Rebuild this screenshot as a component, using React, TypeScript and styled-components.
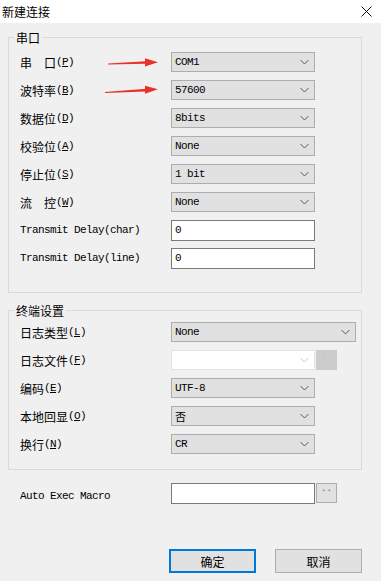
import { FC, ReactNode } from "react";
import styled, { createGlobalStyle } from "styled-components";

const GlobalStyle = createGlobalStyle`
  body {
    margin: 0;
    background: #f0f0f0;
  }
`;

const CJK = `"Noto Sans CJK SC", "Noto Sans", sans-serif`;
const MONO = `"Liberation Mono", "Noto Sans CJK SC", monospace`;

const Window = styled.div`
  position: relative;
  width: 381px;
  height: 581px;
  background: #f0f0f0;
  overflow: hidden;
  font-family: ${CJK};
  color: #000;
`;

const TitleBar = styled.div`
  height: 23px;
  background: #fff;
  display: flex;
  align-items: center;
  justify-content: space-between;
  padding: 0 9px 0 2px;
  font-size: 12px;
`;

const Body = styled.div`
  padding: 6px 19px 0 8px;
`;

const Group = styled.fieldset<{ $top: number; $padTop: number; $padBottom: number }>`
  margin: ${(p) => p.$top}px 0 0;
  border: 1px solid #dadada;
  padding: ${(p) => p.$padTop}px 0 ${(p) => p.$padBottom}px 11px;
  min-inline-size: auto;
`;

const Legend = styled.legend`
  margin-left: -6px;
  padding: 0 2px;
  font-size: 12px;
  line-height: 17px;
`;

const Form = styled.div`
  display: grid;
  grid-template-columns: 151px auto;
  grid-auto-rows: 20px;
  row-gap: 8px;
  align-items: center;
`;

const Label = styled.div<{ $drop?: number }>`
  display: flex;
  align-items: center;
  white-space: pre;
  font-size: 12px;
  height: 20px;
  padding-top: ${(p) => p.$drop ?? 0}px;
`;

const Mono = styled.span`
  font-family: ${MONO};
  font-size: 11px;
  letter-spacing: -0.6px;
`;

const Field = styled.div`
  display: flex;
  align-items: center;
  height: 20px;
`;

const ComboBox = styled.div<{ $width: number; $disabled?: boolean }>`
  box-sizing: border-box;
  width: ${(p) => p.$width}px;
  height: 20px;
  display: flex;
  align-items: center;
  padding: 0 5px 0 3px;
  background: ${(p) => (p.$disabled ? "#fff" : "#e1e1e1")};
  border: 1px solid ${(p) => (p.$disabled ? "#e3e3e3" : "#adadad")};
  font-family: ${MONO};
  font-size: 11px;
  letter-spacing: -0.6px;
  svg {
    margin-left: auto;
  }
`;

const TextBox = styled.div`
  box-sizing: border-box;
  width: 144px;
  height: 21px;
  display: flex;
  align-items: center;
  padding: 0 3px;
  background: #fff;
  border: 1px solid #7a7a7a;
  font-family: ${MONO};
  font-size: 11px;
`;

const DotButton = styled.div<{ $disabled?: boolean }>`
  box-sizing: border-box;
  width: 21px;
  height: 20px;
  margin-left: 1px;
  display: flex;
  align-items: flex-start;
  justify-content: center;
  background: ${(p) => (p.$disabled ? "#cccccc" : "#e1e1e1")};
  border: 1px solid ${(p) => (p.$disabled ? "#cccccc" : "#adadad")};
  color: ${(p) => (p.$disabled ? "#bdbdbd" : "#555")};
  font-family: ${MONO};
  font-size: 9px;
  line-height: 10px;
`;

const MacroRow = styled(Form)`
  margin-top: 13px;
  padding-left: 12px;
`;

const Buttons = styled.div`
  display: flex;
  justify-content: flex-end;
  gap: 19px;
  margin-top: 46px;
`;

const Button = styled.button<{ $primary?: boolean }>`
  box-sizing: border-box;
  width: 87px;
  height: 24px;
  padding: 0;
  background: #e1e1e1;
  border: ${(p) => (p.$primary ? "2px solid #0078d7" : "1px solid #adadad")};
  font-family: ${CJK};
  font-size: 12px;
  color: #000;
`;

const Overlay = styled.svg`
  position: absolute;
  left: 0;
  top: 0;
  pointer-events: none;
`;

const Chevron: FC<{ light?: boolean }> = ({ light }) => (
  <svg width="9" height="6" viewBox="0 0 9 6">
    <polyline
      points="0.5,1 4.5,5 8.5,1"
      fill="none"
      stroke={light ? "#c8c8c8" : "#5a5a5a"}
      strokeWidth="1"
    />
  </svg>
);

const Combo: FC<{ value?: string; width?: number; disabled?: boolean }> = ({
  value = "",
  width = 144,
  disabled,
}) => (
  <ComboBox $width={width} $disabled={disabled}>
    <span>{value}</span>
    <Chevron light={disabled} />
  </ComboBox>
);

const CnLabel: FC<{ name: string; k: string }> = ({ name, k }) => (
  <Label>
    <span>{name}</span>
    <Mono>
      (<u>{k}</u>)
    </Mono>
  </Label>
);

const Row: FC<{ label: ReactNode; children: ReactNode }> = ({ label, children }) => (
  <>
    {label}
    <Field>{children}</Field>
  </>
);

const App: FC = () => {
  return (
    <Window>
      <GlobalStyle />
      <TitleBar>
        <span>新建连接</span>
        <svg width="11" height="11" viewBox="0 0 11 11">
          <path d="M0.5 0.5 L10.5 10.5 M10.5 0.5 L0.5 10.5" stroke="#111" strokeWidth="1" />
        </svg>
      </TitleBar>
      <Body>
        <Group $top={0} $padTop={6} $padBottom={24}>
          <Legend>串口</Legend>
          <Form>
            <Row label={<CnLabel name={"串\u3000口"} k="P" />}>
              <Combo value="COM1" />
            </Row>
            <Row label={<CnLabel name="波特率" k="B" />}>
              <Combo value="57600" />
            </Row>
            <Row label={<CnLabel name="数据位" k="D" />}>
              <Combo value="8bits" />
            </Row>
            <Row label={<CnLabel name="校验位" k="A" />}>
              <Combo value="None" />
            </Row>
            <Row label={<CnLabel name="停止位" k="S" />}>
              <Combo value="1 bit" />
            </Row>
            <Row label={<CnLabel name={"流\u3000控"} k="W" />}>
              <Combo value="None" />
            </Row>
            <Row label={<Label><Mono>Transmit Delay(char)</Mono></Label>}>
              <TextBox>0</TextBox>
            </Row>
            <Row label={<Label><Mono>Transmit Delay(line)</Mono></Label>}>
              <TextBox>0</TextBox>
            </Row>
          </Form>
        </Group>

        <Group $top={9} $padTop={3} $padBottom={15}>
          <Legend>终端设置</Legend>
          <Form>
            <Row label={<CnLabel name="日志类型" k="L" />}>
              <Combo value="None" width={185} />
            </Row>
            <Row label={<CnLabel name="日志文件" k="F" />}>
              <Combo disabled />
              <DotButton $disabled>..</DotButton>
            </Row>
            <Row label={<CnLabel name="编码" k="E" />}>
              <Combo value="UTF-8" />
            </Row>
            <Row label={<CnLabel name="本地回显" k="O" />}>
              <Combo value="否" />
            </Row>
            <Row label={<CnLabel name="换行" k="N" />}>
              <Combo value="CR" />
            </Row>
          </Form>
        </Group>

        <MacroRow>
          <Row label={<Label $drop={6}><Mono>Auto Exec Macro</Mono></Label>}>
            <TextBox />
            <DotButton>..</DotButton>
          </Row>
        </MacroRow>

        <Buttons>
          <Button $primary>确定</Button>
          <Button>取消</Button>
        </Buttons>
      </Body>

      <Overlay width="381" height="581" viewBox="0 0 381 581">
        <g fill="#e8332c">
          <polygon points="108,63.6 146,61.2 146,63.8 108,64.4" />
          <polygon points="145,58.2 158,62.2 145,66.4" />
          <polygon points="105,92.1 146,88.8 146,91.6 105,92.9" />
          <polygon points="145,85.8 158,89.2 145,93.8" />
        </g>
      </Overlay>
    </Window>
  );
};

export default App;
